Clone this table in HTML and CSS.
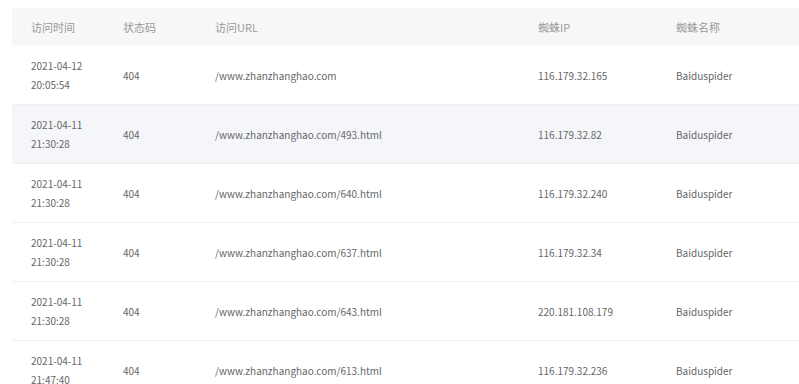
FILE: index.html
```html
<!DOCTYPE html>
<html lang="zh">
<head>
<meta charset="utf-8">
<title>蜘蛛访问记录</title>
<link rel="stylesheet" href="styles.css">
</head>
<body>
<div class="wrap">
  <table class="log">
    <colgroup>
      <col class="c-time"><col class="c-code"><col class="c-url"><col class="c-ip"><col class="c-name">
    </colgroup>
    <thead>
      <tr><th>访问时间</th><th>状态码</th><th>访问URL</th><th>蜘蛛IP</th><th>蜘蛛名称</th></tr>
    </thead>
    <tbody>
      <tr><td><span class="d">2021-04-12</span><span class="d">20:05:54</span></td><td>404</td><td>/www.zhanzhanghao.com</td><td>116.179.32.165</td><td>Baiduspider</td></tr>
      <tr class="hover"><td><span class="d">2021-04-11</span><span class="d">21:30:28</span></td><td>404</td><td>/www.zhanzhanghao.com/493.html</td><td>116.179.32.82</td><td>Baiduspider</td></tr>
      <tr><td><span class="d">2021-04-11</span><span class="d">21:30:28</span></td><td>404</td><td>/www.zhanzhanghao.com/640.html</td><td>116.179.32.240</td><td>Baiduspider</td></tr>
      <tr><td><span class="d">2021-04-11</span><span class="d">21:30:28</span></td><td>404</td><td>/www.zhanzhanghao.com/637.html</td><td>116.179.32.34</td><td>Baiduspider</td></tr>
      <tr><td><span class="d">2021-04-11</span><span class="d">21:30:28</span></td><td>404</td><td>/www.zhanzhanghao.com/643.html</td><td>220.181.108.179</td><td>Baiduspider</td></tr>
      <tr><td><span class="d">2021-04-11</span><span class="d">21:47:40</span></td><td>404</td><td>/www.zhanzhanghao.com/613.html</td><td>116.179.32.236</td><td>Baiduspider</td></tr>
    </tbody>
  </table>
</div>
</body>
</html>
```
FILE: styles.css
```css
html, body {
  margin: 0;
  padding: 0;
  background: #ffffff;
  overflow: hidden;
}
body {
  font-family: "Noto Sans CJK SC", "Open Sans", sans-serif;
  font-size: 11px;
  color: #666666;
}
.wrap {
  padding: 8px 0 0 12px;
  width: 820px;
}
.log {
  border-collapse: collapse;
  width: 808px;
  table-layout: fixed;
}
.c-time { width: 92px; }
.c-code { width: 92px; }
.c-url { width: 323px; }
.c-ip { width: 138px; }
.c-name { width: auto; }
.log th {
  background: #f7f7f7;
  color: #999999;
  font-weight: normal;
  text-align: left;
  height: 38px;
  padding: 0 0 0 19px;
  vertical-align: middle;
}
.log td {
  height: 58px;
  padding: 0 0 0 19px;
  vertical-align: middle;
  font-size: 10px;
  line-height: 19px;
  border-bottom: 1px solid #f0f0f0;
  white-space: nowrap;
}
.log tr.hover td {
  background: #f5f6fa;
}
.d {
  display: block;
}
```
